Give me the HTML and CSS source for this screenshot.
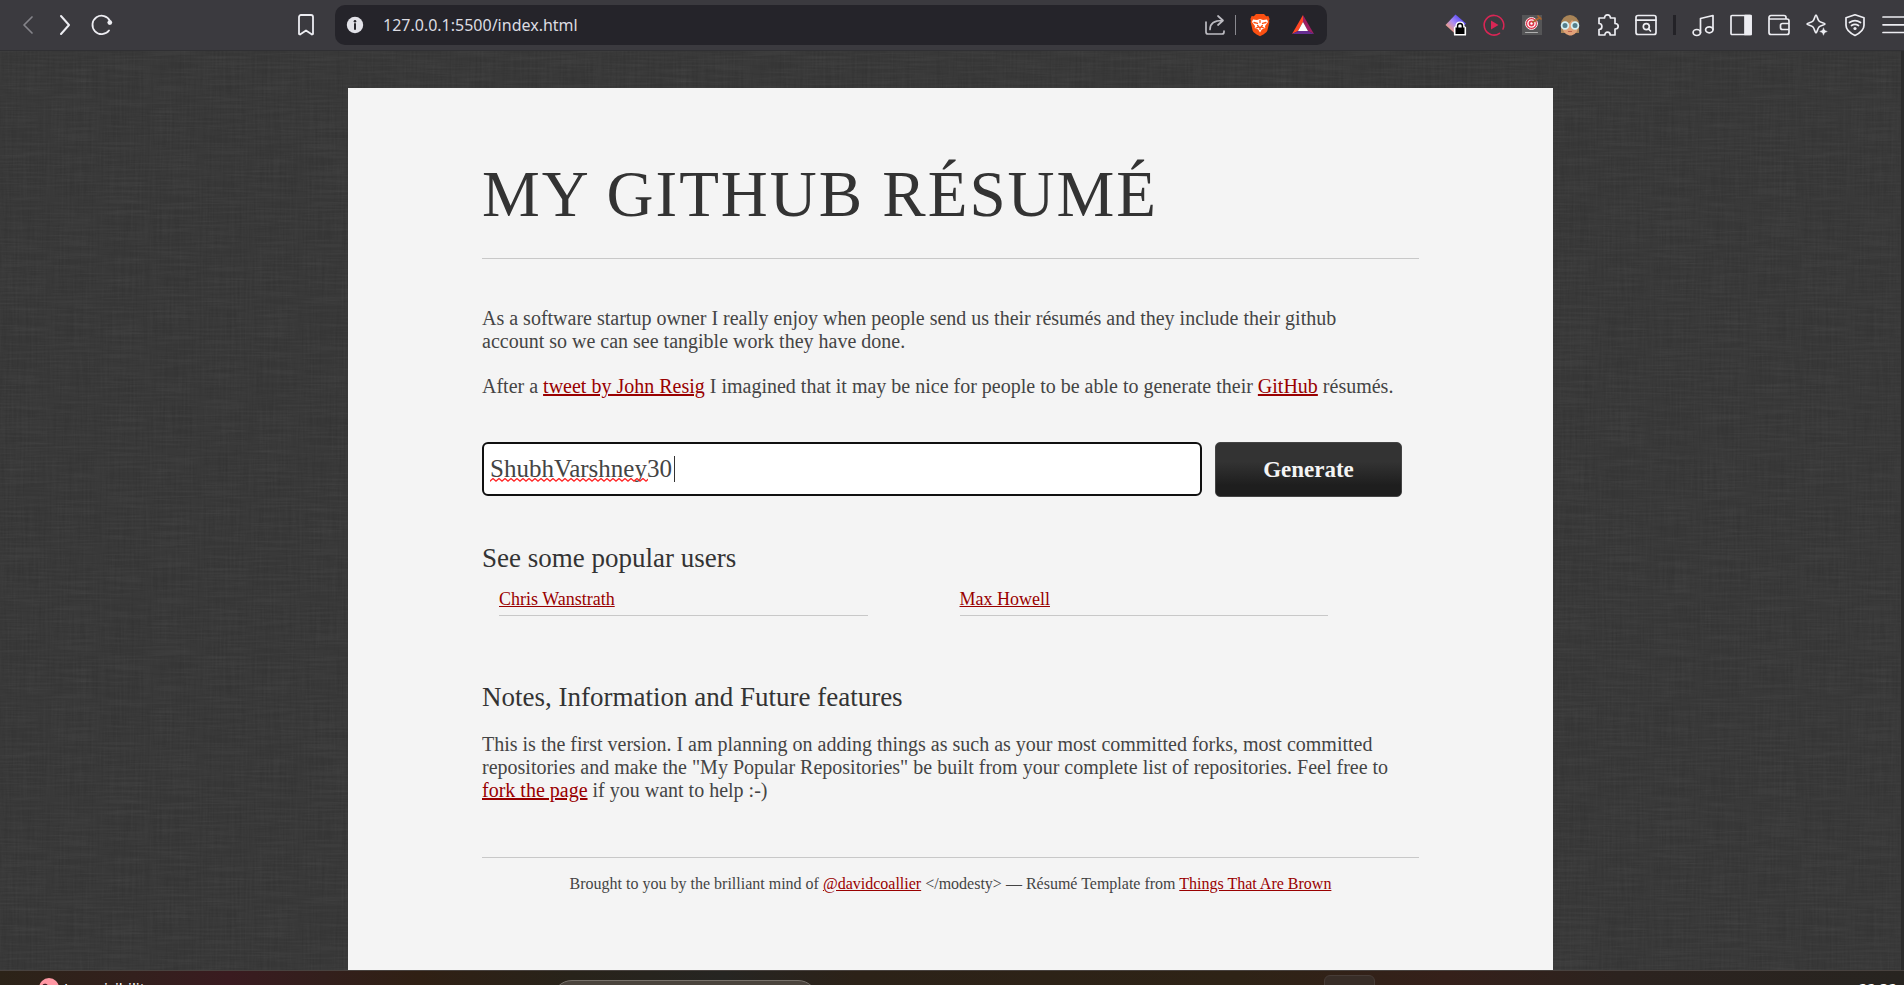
FILE: index.html
```html
<!DOCTYPE html>
<html lang="en">
<head>
<meta charset="utf-8">
<title>My GitHub Résumé</title>
<link rel="stylesheet" href="styles.css">
</head>
<body>
<div class="browser">
  <header class="toolbar">
    <nav class="toolbar-nav" aria-label="Navigation">
      <button class="icon-btn dim" aria-label="Back"><svg viewBox="0 0 22 22"><path d="M15 3 7 11l8 8"/></svg></button>
      <button class="icon-btn" aria-label="Forward"><svg viewBox="0 0 22 22"><path d="M7 2l8 9-8 9" stroke-width="2"/></svg></button>
      <button class="icon-btn" aria-label="Reload"><svg viewBox="0 0 22 22"><path d="M18 16.5A9.2 9.2 0 1 1 19 7" stroke-width="1.8"/><circle cx="18.8" cy="8.6" r="2.4" fill="currentColor" stroke="none"/></svg></button>
      <button class="icon-btn bookmark" aria-label="Bookmark"><svg viewBox="0 0 22 22"><path d="M4 20V3a2 2 0 0 1 2-2h10a2 2 0 0 1 2 2v17l-1 .6-6-4.200-6 4.200z" stroke-width="1.8"/></svg></button>
    </nav>
    <div class="address">
      <button class="icon-btn info" aria-label="Site information"><svg viewBox="0 0 22 22"><circle cx="11" cy="11" r="8.2" fill="#e2e2e8" stroke="none"/><path d="M11 10v5" stroke="#28272c" stroke-width="2"/><circle cx="11" cy="7.3" r="1.3" fill="#28272c" stroke="none"/></svg></button>
      <input class="url" type="text" value="127.0.0.1:5500/index.html" aria-label="Address">
      <button class="icon-btn soft" aria-label="Share"><svg viewBox="0 0 22 22"><path d="M2 8v10a2 2 0 0 0 2 2h14a2 2 0 0 0 2-2v-1M6 15.500c0-6 4-9 12.500-9M14 2l5 4.500-5 4.500"/></svg></button>
      <span class="divider light"></span>
      <button class="icon-btn" aria-label="Brave Shields"><svg viewBox="0 0 22 22"><path d="M7 0h8l2.200 2.200 2.200-.2 1.200 3-.6 2 .4 1-2 8.500c-.4 1.500-2 2.600-3.600 3.700L11 22.300l-3.800-2.100c-1.600-1.100-3.200-2.200-3.600-3.700L1.600 8 2 7l-.6-2 1.200-3 2.200.2z" fill="#fb5012" stroke="none"/><path d="M4 5.500l4 .6L11 5l3 1.100 4-.6 1 2.500-3 4 .3 2-3.500 1.500L11 18.500 9.200 15.500 5.700 14l.3-2-3-4z" fill="#fff" stroke="none"/><path d="M5 8.500l3.500.8M17 8.500l-3.500.8M11 6.500v2M8.600 11.500 11 14l2.400-2.500M7 14l2.500-.8M15 14l-2.500-.8M11 14v1.500" stroke="#fb5012" stroke-width="1.300"/></svg></button>
      <button class="icon-btn" aria-label="Rewards"><svg viewBox="0 0 22 22"><g stroke="none"><path d="M11 1v7l-5 9-6 3z" fill="#ff4724"/><path d="M11 1l11 19-6-3-5-9z" fill="#9e1f63"/><path d="M0 20l6-3h10l6 3z" fill="#662d91"/><path d="M11 8l5 9H6z" fill="#fff"/></g></svg></button>
    </div>
    <div class="extensions">
      <button class="icon-btn" aria-label="Private extension"><svg viewBox="0 0 22 22"><defs><linearGradient id="gem" x1="1" y1="0" x2="0" y2="1"><stop offset="0.200" stop-color="#5a4bf5"/><stop offset="0.500" stop-color="#a98af5"/><stop offset="0.850" stop-color="#ffa26b"/></linearGradient></defs><path d="M10.500.5 21 9.500 11 20.500.5 11z" fill="url(#gem)" stroke="none"/><path d="M11 12.500q0-4.500 4-4.500t4 4.500l1.500 1v7.500h-11v-7.500z" fill="#fff" stroke="#fff" stroke-width="1.200"/><path d="M10.500 13.500h9V20h-9z" fill="#000" stroke="none"/><path d="M12.600 14v-2.200a2.400 2.400 0 0 1 4.800 0V14" stroke="#000" stroke-width="1.500"/></svg></button>
      <button class="icon-btn" aria-label="Player"><svg viewBox="0 0 22 22"><path d="M16.500 19.300A9.800 9.800 0 1 1 20 15" stroke="#d92655" stroke-width="1.600"/><path d="M8 6.500 15.500 11 8 15.500z" fill="#d92655" stroke="none"/></svg></button>
      <button class="icon-btn" aria-label="Target"><svg viewBox="0 0 22 22"><path d="M1 1h20v20H1z" fill="#555557" stroke="none"/><circle cx="10.500" cy="9.500" r="6" fill="#e0344c" stroke="#f4e6e8" stroke-width="1"/><circle cx="10.500" cy="9.500" r="3.600" fill="#e0344c" stroke="#fff" stroke-width="1.400"/><circle cx="10.500" cy="9.500" r="1.200" fill="#fff" stroke="none"/><path d="M12 8l7-4.500M17 2l3 3" stroke="#a9642e"/><path d="M4.500 18.500h12" stroke="#b0b0b0" stroke-width="1"/></svg></button>
      <button class="icon-btn" aria-label="Avatar"><svg viewBox="0 0 22 22"><g stroke="none"><path d="M2 19V10a9 9 0 0 1 18 0v9z" fill="#a98457"/><path d="M4 11c3 0 8-2 9-5 2 3 4 4 5.500 4.500V16c-1 3-4 5.500-7 5.500S5 19 4 16z" fill="#e1a178"/></g><circle cx="6" cy="11.500" r="3.400" fill="#547f8c" stroke="#d4f0f3" stroke-width="1.800"/><circle cx="16" cy="11.500" r="3.400" fill="#547f8c" stroke="#d4f0f3" stroke-width="1.800"/><path d="M9.500 17.500h3" stroke="#b85c4c" stroke-width="1.200"/></svg></button>
      <button class="icon-btn" aria-label="Extensions"><svg viewBox="0 0 22 22"><path d="M2 4h5.500c0-1.200.8-3.200 3-3.200s3 2 3 3.200H18v5.500c1.500 0 3.200.8 3.200 2.800S19.500 15 18 15v6h-4.800c0-1.600-1-2.800-2.700-2.800S7.800 19.400 7.800 21H2v-5.500c1.800 0 2.900-1.200 2.900-3S3.800 9.500 2 9.500z"/></svg></button>
      <button class="icon-btn" aria-label="Search page"><svg viewBox="0 0 22 22"><rect x="1" y="1.500" width="20" height="19" rx="2"/><path d="M1 6.200h20M13.500 15l2 2"/><circle cx="11.300" cy="12.700" r="3"/></svg></button>
      <span class="divider"></span>
      <button class="icon-btn" aria-label="Media"><svg viewBox="0 0 22 22"><path d="M8.500 18.500V4.500L21 1.500v14"/><ellipse cx="4.800" cy="18.500" rx="3.700" ry="3"/><ellipse cx="17.300" cy="15.800" rx="3.700" ry="3"/></svg></button>
      <button class="icon-btn" aria-label="Sidebar"><svg viewBox="0 0 22 22"><rect x="1" y="1.500" width="20" height="19" rx="1"/><path d="M15 1.500h6v19h-6z" fill="currentColor"/></svg></button>
      <button class="icon-btn" aria-label="Wallet"><svg viewBox="0 0 22 22"><path d="M18 5V3.500a2 2 0 0 0-2-2H3a2 2 0 0 0-2 2V18.500a2 2 0 0 0 2 2h16a2 2 0 0 0 2-2V7a2 2 0 0 0-2-2H2M21 9.500h-6.500a2 2 0 0 0-2 2v2a2 2 0 0 0 2 2H21"/></svg></button>
      <button class="icon-btn" aria-label="Leo"><svg viewBox="0 0 22 22"><path d="M10 1c1 0 1.500 4.500 3 6s6 2 6 3-4.500 1.500-6 3-2 6-3 6-1.500-4.500-3-6-6-2-6-3 4.500-1.500 6-3 2-6 3-6z"/><path d="M17.500 13l1.400 3.100 3.100 1.400-3.100 1.400-1.400 3.100-1.400-3.100-3.100-1.400 3.100-1.400z" fill="currentColor" stroke="#3b3a3f" stroke-width=".4"/></svg></button>
      <button class="icon-btn" aria-label="VPN"><svg viewBox="0 0 22 22"><path d="M11 .8l9 3v7.500c0 5-4.500 8-9 10.200-4.500-2.200-9-5.200-9-10.200V3.800z"/><path d="M5.500 8.500q5.500-3.600 11 0M7.500 11.500q3.500-2.200 7 0"/><circle cx="11" cy="14.500" r="1.600" fill="currentColor" stroke="none"/></svg></button>
      <button class="icon-btn" aria-label="Menu"><svg viewBox="0 0 22 22"><path d="M1 3h21M1 10.800h21M1 18.500h21"/></svg></button>
    </div>
  </header>

  <main class="viewport">
    <article class="sheet">
      <h1 class="title">My GitHub Résumé</h1>
      <section class="intro">
        <p>As a software startup owner I really enjoy when people send us their résumés and they include their github<br>account so we can see tangible work they have done.</p>
        <p>After a <a href="#">tweet by John Resig</a> I imagined that it may be nice for people to be able to generate their <a href="#">GitHub</a> résumés.</p>
      </section>
      <form class="generator">
        <div class="username">
          <input class="username-input" type="text" value="ShubhVarshney30" aria-label="GitHub username">
          <div class="marks" aria-hidden="true">
            <svg class="squiggle"><defs><pattern id="wave" width="6" height="4" patternUnits="userSpaceOnUse"><path d="M-1 4 3 .5 7 4" fill="none" stroke="#f22" stroke-width="1.300"/></pattern></defs><rect width="100%" height="4" fill="url(#wave)"/></svg>
            <span class="caret"></span>
          </div>
        </div>
        <button class="generate" type="button">Generate</button>
      </form>
      <section class="popular">
        <h2>See some popular users</h2>
        <ul class="users">
          <li><a href="#">Chris Wanstrath</a></li>
          <li><a href="#">Max Howell</a></li>
        </ul>
      </section>
      <section class="notes">
        <h2>Notes, Information and Future features</h2>
        <p>This is the first version. I am planning on adding things as such as your most committed forks, most committed repositories and make the "My Popular Repositories" be built from your complete list of repositories. Feel free to <a href="#">fork the page</a> if you want to help :-)</p>
      </section>
      <footer class="credits">Brought to you by the brilliant mind of <a href="#">@davidcoallier</a> &lt;/modesty&gt; — Résumé Template from <a href="#">Things That Are Brown</a></footer>
    </article>
    <div class="scroll-track"></div>
  </main>

  <div class="taskbar">
    <div class="weather"><svg class="weather-dot" viewBox="0 0 20 20"><circle cx="10" cy="10" r="10" fill="#ff98a4"/><path d="M4 7.500a2.500 2.500 0 0 1 4.500 1M13 9h4" fill="none" stroke="#43181f" stroke-width="1.500"/></svg><span>Low visibility</span></div>
    <div class="search-pill"></div>
    <div class="app-slot"></div>
    <div class="clock">22:32</div>
  </div>
</div>
</body>
</html>
```
FILE: styles.css
```css
* { box-sizing: border-box; }

body {
  margin: 0;
  background: #393939;
  color: #444;
  font-family: Georgia, "Liberation Serif", serif;
}

a { color: #990000; }

.browser {
  display: flex;
  flex-direction: column;
  height: 100vh;
  overflow: hidden;
}

/* Toolbar */
.toolbar {
  display: flex;
  align-items: center;
  flex: none;
  height: 51px;
  background: #3b3a3f;
  border-bottom: 1px solid #303033;
}

.icon-btn {
  display: block;
  flex: none;
  width: 22px;
  height: 22px;
  padding: 0;
  border: 0;
  background: none;
  color: #ededf2;
}

.icon-btn svg {
  display: block;
  width: 22px;
  height: 22px;
  overflow: visible;
  fill: none;
  stroke: currentColor;
  stroke-width: 1.7;
  stroke-linejoin: round;
  stroke-linecap: round;
}

.dim { color: #85848a; }
.soft { color: #bdbcc2; }

.toolbar-nav {
  display: flex;
  align-items: center;
  gap: 15px;
  width: 335px;
  padding: 0 18px 0 17px;
}

.bookmark { margin-left: auto; }

.address {
  display: flex;
  align-items: center;
  flex: 1;
  height: 40px;
  padding: 0 13px 0 9px;
  border-radius: 10px;
  background: #25242a;
}

.url {
  flex: 1;
  min-width: 0;
  margin-left: 17px;
  padding: 0;
  border: 0;
  background: none;
  color: #dcdce2;
  font: 16px "Noto Sans", sans-serif;
}

.divider {
  flex: none;
  width: 3px;
  height: 20px;
  background: #232227;
}

.divider.light {
  width: 1px;
  margin: 0 13px 0 9px;
  background: #8a898f;
}

.address .icon-btn:last-child { margin-left: 21px; }

.extensions {
  display: flex;
  align-items: center;
  justify-content: flex-end;
  gap: 16px;
  width: 577px;
}

/* Page */
.viewport {
  position: relative;
  flex: 1;
  min-height: 0;
  overflow: hidden;
  padding: 37px 3px 0 0;
  background-color: #393939;
  background-image:
    url("data:image/svg+xml,%3Csvg xmlns='http://www.w3.org/2000/svg' width='600' height='600'%3E%3Cfilter id='a' x='0' y='0' width='1' height='1'%3E%3CfeTurbulence type='fractalNoise' baseFrequency='.02 .5' numOctaves='3' seed='4' stitchTiles='stitch'/%3E%3CfeColorMatrix values='0 0 0 0 1 0 0 0 0 1 0 0 0 0 1 .5 0 0 0 -.2'/%3E%3C/filter%3E%3Crect width='600' height='600' filter='url(%23a)' opacity='.16'/%3E%3C/svg%3E"),
    url("data:image/svg+xml,%3Csvg xmlns='http://www.w3.org/2000/svg' width='600' height='600'%3E%3Cfilter id='a' x='0' y='0' width='1' height='1'%3E%3CfeTurbulence type='fractalNoise' baseFrequency='.5 .02' numOctaves='3' seed='9' stitchTiles='stitch'/%3E%3CfeColorMatrix values='0 0 0 0 0 0 0 0 0 0 0 0 0 0 0 .8 0 0 0 -.2'/%3E%3C/filter%3E%3Crect width='600' height='600' filter='url(%23a)' opacity='.18'/%3E%3C/svg%3E");
}

.scroll-track {
  position: absolute;
  top: 0;
  right: 0;
  bottom: 0;
  width: 3px;
  background: #2b2b2b;
}

.sheet {
  width: 64%;
  max-width: 1205px;
  min-height: 100%;
  margin: 0 auto;
  padding: 69px 134px 72px;
  background: #f4f4f4;
  font-size: 20px;
  line-height: 23px;
}

.title {
  margin: 0;
  padding-bottom: 26px;
  border-bottom: 1px solid #c8c8c8;
  color: #333;
  font-size: 65px;
  font-weight: 400;
  line-height: 75px;
  letter-spacing: 2px;
  text-transform: uppercase;
}

.intro { padding-top: 48px; }

.intro p { margin: 0 0 22px; }

.generator {
  display: flex;
  gap: 13px;
  margin: 44px 17px 0 0;
}

.username {
  position: relative;
  flex: 1;
}

.username-input {
  display: block;
  width: 100%;
  height: 54px;
  padding: 0 6px;
  border: 2px solid #101010;
  border-radius: 6px;
  outline: 0;
  background: #fff;
  color: #444;
  font: 25px Georgia, "Liberation Serif", serif;
}

/* Spelling underline and text cursor drawn over the field */
.marks {
  position: absolute;
  top: 14px;
  left: 8px;
  display: flex;
  align-items: flex-end;
  width: 185px;
  height: 26px;
  pointer-events: none;
}

.squiggle {
  width: 158px;
  height: 4px;
}

.caret {
  width: 1px;
  height: 26px;
  margin-left: auto;
  background: #333;
}

.generate {
  width: 187px;
  height: 55px;
  border: 1px solid #444;
  border-radius: 5px;
  background: linear-gradient(#333 0%, #333 35%, #1e1e1e 80%);
  color: #f4f4f4;
  font: 700 23px Georgia, "Liberation Serif", serif;
}

h2 {
  margin: 0;
  color: #333;
  font-size: 27px;
  font-weight: 400;
  line-height: 30px;
}

.popular { margin-top: 46px; }

.users {
  display: flex;
  gap: 92px;
  margin: 15px 91px 0 17px;
  padding: 0;
  list-style: none;
  font-size: 18px;
}

.users li {
  flex: 1;
  padding-bottom: 4px;
  border-bottom: 1px solid #c8c8c8;
}

.notes { margin-top: 66px; }

.notes p { margin: 21px 0 0; }

.credits {
  margin-top: 55px;
  padding-top: 14px;
  border-top: 1px solid #c8c8c8;
  font-size: 16px;
  text-align: center;
}

/* Taskbar */
.taskbar {
  display: flex;
  align-items: flex-start;
  flex: none;
  height: 15px;
  overflow: hidden;
  border-top: 1px solid #48423f;
  background: linear-gradient(90deg, #2c2318 0%, #33201d 7%, #3a1b20 12%, #331f1c 17%, #302014 22%, #28231a 30%, #262522 38%, #2c2218 45%, #2e2316 65%, #35201a 76%, #2c231f 85%, #272420 100%);
  color: #fff;
  font: 15px "Noto Sans", sans-serif;
}

.weather {
  display: flex;
  gap: 5px;
  width: 552px;
  padding: 7px 0 0 39px;
  line-height: 20px;
}

.weather-dot {
  width: 20px;
  height: 20px;
}

.search-pill {
  width: 266px;
  height: 40px;
  margin-top: 9px;
  border: 1px solid #77716a;
  border-radius: 20px;
  background: #4b443d;
}

.app-slot {
  width: 51px;
  height: 50px;
  margin: 4px 0 0 506px;
  border: 1px solid #473c37;
  border-radius: 6px;
  background: #382d27;
}

.clock {
  margin: 7px 7px 0 auto;
  line-height: 20px;
}
```
